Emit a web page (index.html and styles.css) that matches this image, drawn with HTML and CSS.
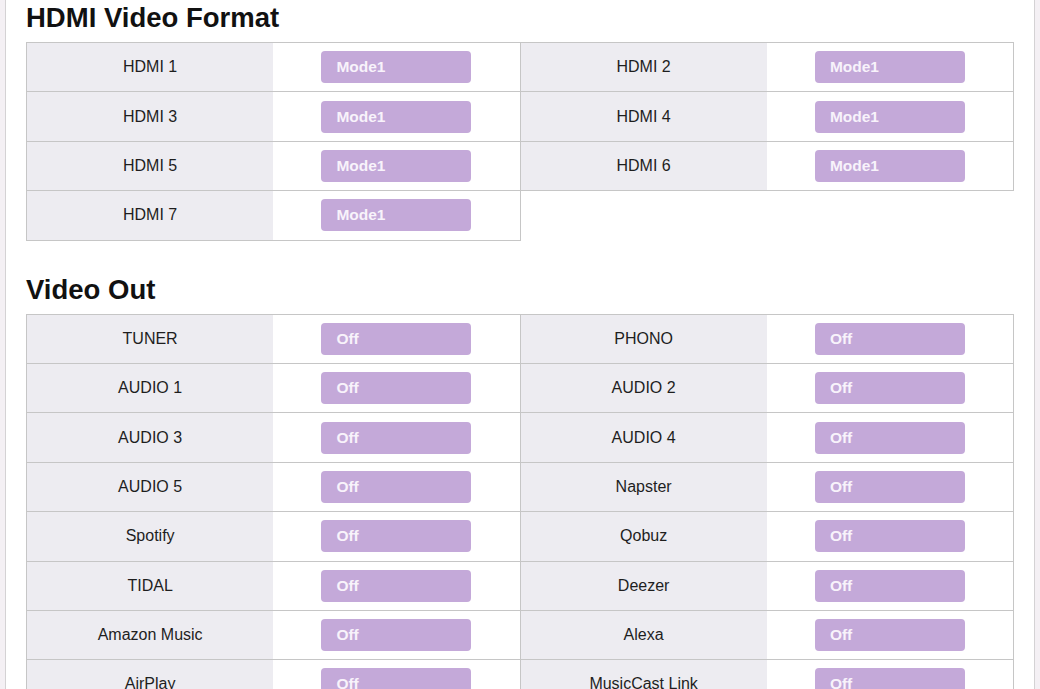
FILE: index.html
```html
<!DOCTYPE html>
<html lang="en">
<head>
  <meta charset="UTF-8" />
  <meta name="viewport" content="width=device-width, initial-scale=1.0" />
  <title>Video Settings</title>
  <link rel="stylesheet" href="styles.css">
</head>
<body>
  <div class="container">
    <section class="section">
      <h2>HDMI Video Format</h2>
      <div class="grid">
        <div class="item"><div class="label">HDMI 1</div><div class="value"><button>Mode1</button></div></div>
        <div class="item"><div class="label">HDMI 2</div><div class="value"><button>Mode1</button></div></div>
        <div class="item"><div class="label">HDMI 3</div><div class="value"><button>Mode1</button></div></div>
        <div class="item"><div class="label">HDMI 4</div><div class="value"><button>Mode1</button></div></div>
        <div class="item"><div class="label">HDMI 5</div><div class="value"><button>Mode1</button></div></div>
        <div class="item"><div class="label">HDMI 6</div><div class="value"><button>Mode1</button></div></div>
        <div class="item"><div class="label">HDMI 7</div><div class="value"><button>Mode1</button></div></div>
      </div>
    </section>

    <section class="section">
      <h2>Video Out</h2>
      <div class="grid">
        <div class="item"><div class="label">TUNER</div><div class="value"><button>Off</button></div></div>
        <div class="item"><div class="label">PHONO</div><div class="value"><button>Off</button></div></div>
        <div class="item"><div class="label">AUDIO 1</div><div class="value"><button>Off</button></div></div>
        <div class="item"><div class="label">AUDIO 2</div><div class="value"><button>Off</button></div></div>
        <div class="item"><div class="label">AUDIO 3</div><div class="value"><button>Off</button></div></div>
        <div class="item"><div class="label">AUDIO 4</div><div class="value"><button>Off</button></div></div>
        <div class="item"><div class="label">AUDIO 5</div><div class="value"><button>Off</button></div></div>
        <div class="item"><div class="label">Napster</div><div class="value"><button>Off</button></div></div>
        <div class="item"><div class="label">Spotify</div><div class="value"><button>Off</button></div></div>
        <div class="item"><div class="label">Qobuz</div><div class="value"><button>Off</button></div></div>
        <div class="item"><div class="label">TIDAL</div><div class="value"><button>Off</button></div></div>
        <div class="item"><div class="label">Deezer</div><div class="value"><button>Off</button></div></div>
        <div class="item"><div class="label">Amazon Music</div><div class="value"><button>Off</button></div></div>
        <div class="item"><div class="label">Alexa</div><div class="value"><button>Off</button></div></div>
        <div class="item"><div class="label">AirPlay</div><div class="value"><button>Off</button></div></div>
        <div class="item"><div class="label">MusicCast Link</div><div class="value"><button>Off</button></div></div>
      </div>
    </section>
  </div>
</body>
</html>
```

FILE: styles.css
```css
body {
  font-family: "Liberation Sans", Arial, sans-serif;
  margin: 0;
  padding: 0;
  background-color: #f4f0f4;
  color: #1a1a1a;
}

.container {
  margin: 0 5px;
  padding: 2px 20px 20px;
  background-color: white;
  border-left: 1px solid #d4d2d4;
  border-right: 1px solid #d4d2d4;
}

.section + .section {
  margin-top: 33px;
}

h2 {
  font-size: 27.5px;
  line-height: 32px;
  font-weight: bold;
  color: #111;
  margin: 0 0 8px;
}

.grid {
  display: grid;
  grid-template-columns: 1fr 1fr;
  grid-auto-rows: 49.4px;
  border-top: 1px solid #c6c6c6;
  border-left: 1px solid #c6c6c6;
}

.item {
  display: flex;
  border-right: 1px solid #c6c6c6;
  border-bottom: 1px solid #c6c6c6;
}

.label {
  flex: 1;
  display: flex;
  align-items: center;
  justify-content: center;
  background-color: #edecf1;
  font-size: 16px;
  color: #1e1e1e;
}

.value {
  flex: 1;
  display: flex;
  align-items: center;
  justify-content: center;
}

button {
  width: 150px;
  height: 32px;
  padding: 0 15px;
  text-align: left;
  background-color: #c4a9d9;
  color: #f8f3fb;
  border: none;
  border-radius: 4px;
  font-family: inherit;
  font-size: 15.5px;
  font-weight: bold;
  cursor: pointer;
}
```
